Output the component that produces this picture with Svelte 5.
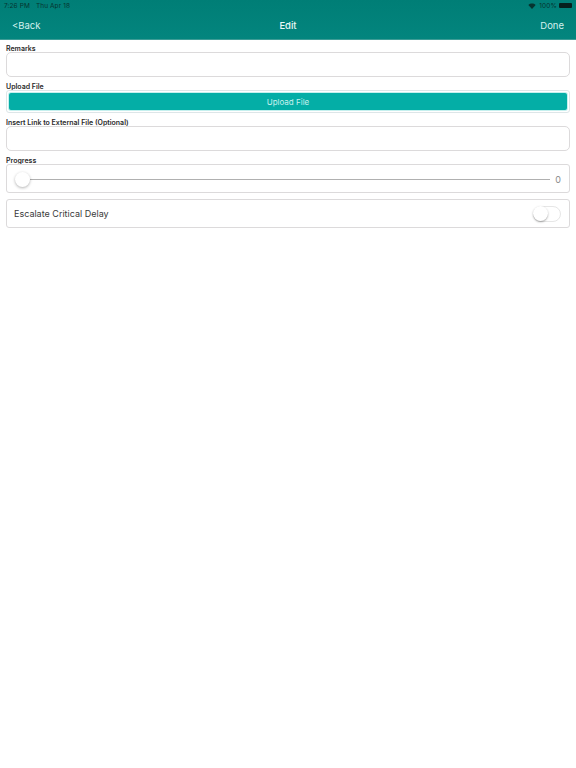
<script>
  let remarks = $state('');
  let link = $state('');
  let progress = $state(0);
  let escalate = $state(false);
</script>

<div class="page">
  <header class="nav">
    <div class="status">
      <span class="time">7:26 PM</span>
      <span class="date">Thu Apr 18</span>
      <span class="spacer"></span>
      <svg class="wifi" width="8" height="6" viewBox="0 0 18 14" aria-hidden="true">
        <path d="M9 14 0.5 4.6C5.3 0.2 12.7 0.2 17.5 4.6Z" fill="#06332f" />
      </svg>
      <span class="pct">100%</span>
      <span class="battery"></span>
    </div>
    <div class="bar">
      <span class="back">&lt;Back</span>
      <span class="title">Edit</span>
      <span class="done">Done</span>
    </div>
  </header>

  <main class="form">
    <section class="field">
      <div class="label">Remarks</div>
      <input class="input" bind:value={remarks} />
    </section>

    <section class="field">
      <div class="label">Upload File</div>
      <div class="upload-box">
        <button class="upload">Upload File</button>
      </div>
    </section>

    <section class="field">
      <div class="label">Insert Link to External File (Optional)</div>
      <input class="input" bind:value={link} />
    </section>

    <section class="field">
      <div class="label">Progress</div>
      <div class="box slider">
        <span class="track"><span class="knob"></span></span>
        <span class="value">{progress}</span>
      </div>
    </section>

    <section class="box toggle-row">
      <span>Escalate Critical Delay</span>
      <button class="switch" class:on={escalate} aria-label="Escalate Critical Delay" onclick={() => (escalate = !escalate)}>
        <span class="thumb"></span>
      </button>
    </section>
  </main>
</div>

<style>
  :global(body) {
    background: #fff;
    font-family: "Inter", "Liberation Sans", sans-serif;
  }
  .page {
    width: 576px;
    height: 768px;
    background: #fff;
    overflow: hidden;
  }
  .nav {
    box-sizing: border-box;
    height: 40px;
    background: linear-gradient(#007e76, #03857e);
    border-bottom: 1px solid #3d9c96;
    display: flex;
    flex-direction: column;
  }
  .status {
    height: 11px;
    display: flex;
    align-items: center;
    gap: 6px;
    padding: 0 4px;
    font-size: 6.5px;
    color: #06332f;
    letter-spacing: 0.1px;
  }
  .spacer {
    flex: 1;
  }
  .pct {
    margin-left: -3px;
  }
  .battery {
    width: 13px;
    height: 5px;
    display: block;
    background: #06201e;
    border-radius: 1px;
    margin-left: -4px;
  }
  .bar {
    flex: 1;
    display: grid;
    grid-template-columns: 1fr auto 1fr;
    align-items: center;
    padding: 0 12px;
    color: #d4f1ee;
    font-size: 9.5px;
  }
  .title {
    font-weight: 500;
    color: #e9f8f6;
  }
  .done {
    text-align: right;
  }
  .form {
    padding: 5px 6px 0;
    display: flex;
    flex-direction: column;
    gap: 6px;
  }
  .field {
    display: flex;
    flex-direction: column;
  }
  .label {
    font-size: 7px;
    font-weight: 600;
    line-height: 7px;
    color: #2a2a2a;
  }
  .input,
  .box,
  .upload-box {
    box-sizing: border-box;
    border: 1px solid #dcdadb;
    border-radius: 3px;
    background: #fff;
  }
  .input {
    display: block;
    width: 100%;
    height: 25px;
    padding: 0 8px;
    outline: none;
    border-radius: 5px;
  }
  .upload-box {
    height: 23px;
    padding: 2px;
    border-color: #dde6e8;
  }
  .upload {
    display: block;
    width: 100%;
    height: 17px;
    border: 0;
    border-radius: 2px;
    padding: 0;
    background: #04aea6;
    color: #c9f1ee;
    font: inherit;
    font-size: 8px;
    box-shadow: 0 0 0 1px #c5f0ee;
  }
  .slider {
    height: 29px;
    display: flex;
    align-items: center;
    padding: 1px 8px 0 15px;
    gap: 5px;
  }
  .track {
    flex: 1;
    height: 1px;
    background: #b0b0b0;
    position: relative;
  }
  .knob {
    position: absolute;
    left: -7px;
    top: -7px;
    width: 15px;
    height: 15px;
    border-radius: 50%;
    background: #fff;
    box-shadow: 0 1px 3px rgba(0, 0, 0, 0.3);
  }
  .value {
    font-size: 9px;
    color: #8a8a8a;
  }
  .toggle-row {
    height: 29px;
    display: flex;
    align-items: center;
    justify-content: space-between;
    padding: 0 8px 0 7px;
    font-size: 9px;
    color: #3a3a3a;
  }
  .switch {
    width: 28px;
    height: 16px;
    padding: 0;
    border: 1px solid #e6e6e6;
    border-radius: 8px;
    background: #fff;
    position: relative;
  }
  .switch.on {
    background: #04aea6;
  }
  .thumb {
    position: absolute;
    left: -1px;
    top: -1px;
    width: 15px;
    height: 15px;
    border-radius: 50%;
    background: #fff;
    box-shadow: 0 1px 2px rgba(0, 0, 0, 0.35);
  }
  .switch.on .thumb {
    left: 12px;
  }
</style>
